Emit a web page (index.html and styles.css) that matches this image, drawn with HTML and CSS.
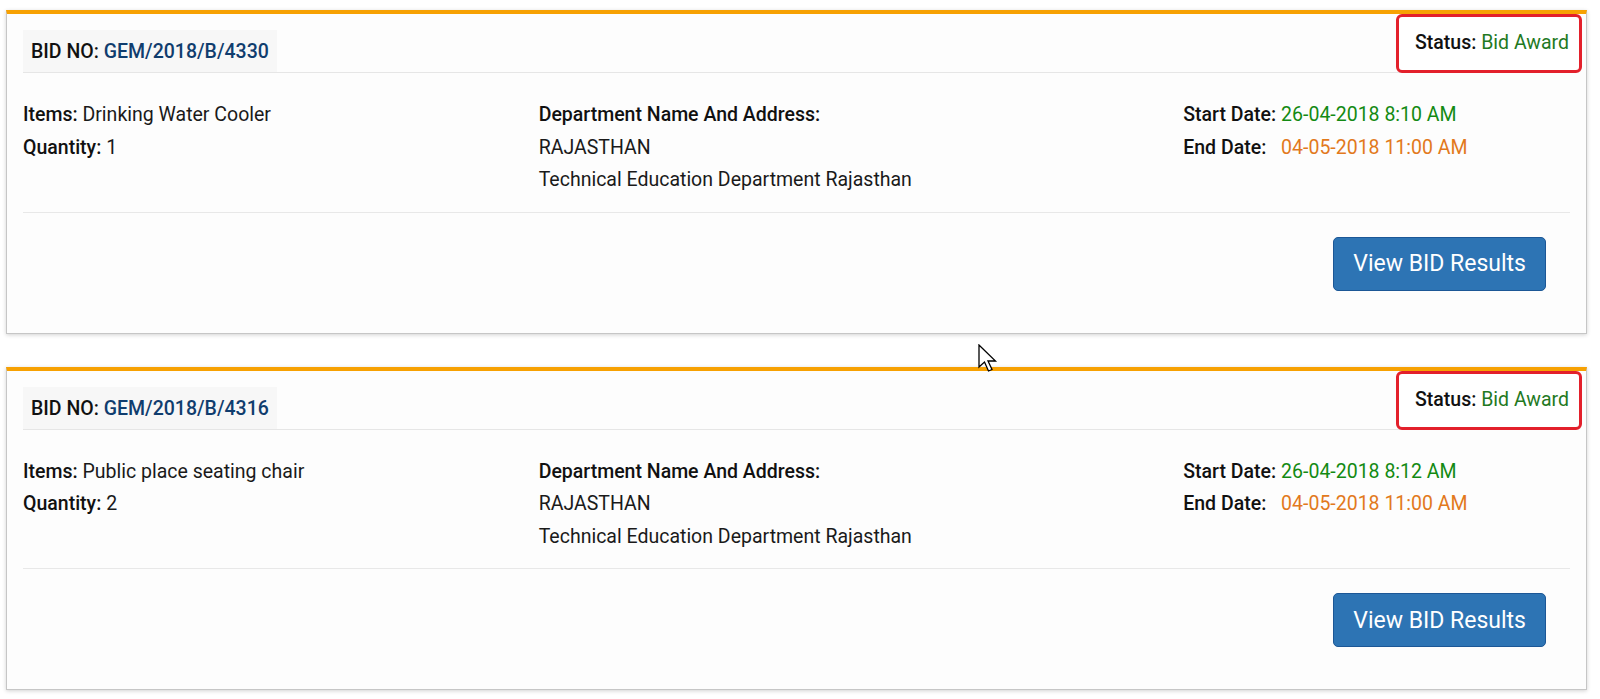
FILE: index.html
```html
<!DOCTYPE html>
<html lang="en">
<head>
    <meta charset="UTF-8">
    <meta name="viewport" content="width=device-width, initial-scale=1.0">
    <title>Bid List</title>
    <link rel="stylesheet" href="styles.css">
</head>
<body>
    <div class="bid-list">
        <!-- bid 4330 -->
        <div class="bid-card">
            <div class="bid-head">
                <div class="bid-no">BID NO: <a href="#">GEM/2018/B/4330</a></div>
            </div>
            <div class="bid-status">Status: <span>Bid Award</span></div>
            <div class="bid-body">
                <div class="col">
                    <p><b>Items:</b> Drinking Water Cooler</p>
                    <p><b>Quantity:</b> 1</p>
                </div>
                <div class="col">
                    <p><b>Department Name And Address:</b></p>
                    <p>RAJASTHAN</p>
                    <p>Technical Education Department Rajasthan</p>
                </div>
                <div class="col dates">
                    <b>Start Date:</b><span class="start">26-04-2018 8:10 AM</span>
                    <b>End Date:</b><span class="end">04-05-2018 11:00 AM</span>
                </div>
            </div>
            <div class="bid-foot">
                <button class="btn-result">View BID Results</button>
            </div>
        </div>

        <!-- bid 4316 -->
        <div class="bid-card">
            <div class="bid-head">
                <div class="bid-no">BID NO: <a href="#">GEM/2018/B/4316</a></div>
            </div>
            <div class="bid-status">Status: <span>Bid Award</span></div>
            <div class="bid-body">
                <div class="col">
                    <p><b>Items:</b> Public place seating chair</p>
                    <p><b>Quantity:</b> 2</p>
                </div>
                <div class="col">
                    <p><b>Department Name And Address:</b></p>
                    <p>RAJASTHAN</p>
                    <p>Technical Education Department Rajasthan</p>
                </div>
                <div class="col dates">
                    <b>Start Date:</b><span class="start">26-04-2018 8:12 AM</span>
                    <b>End Date:</b><span class="end">04-05-2018 11:00 AM</span>
                </div>
            </div>
            <div class="bid-foot">
                <button class="btn-result">View BID Results</button>
            </div>
        </div>
    </div>

    <!-- mouse pointer -->
    <svg class="pointer" width="20" height="29" viewBox="0 0 20 29">
        <path d="M1 1 L1 23 L6.5 18 L10.5 27 L14 25.5 L10 17 L17.5 17 Z" fill="#fff" stroke="#000" stroke-width="1.3" stroke-linejoin="miter"/>
    </svg>
</body>
</html>
```

FILE: styles.css
```css
* { margin: 0; padding: 0; box-sizing: border-box; }
body {
    background: #fff;
    font-family: Roboto, "Liberation Sans", Arial, sans-serif;
    font-size: 19.5px;
    color: #1a1a1a;
    position: relative;
    min-height: 100vh;
}
.bid-list {
    padding: 10px 13px 0 6px;
    display: flex;
    flex-direction: column;
    gap: 33px;
}
.bid-card {
    position: relative;
    background: #fdfdfd;
    border: 1px solid #c6c6c6;
    border-top: 4px solid #f7a102;
    box-shadow: 0 1px 4px rgba(0, 0, 0, 0.18);
    padding: 0 16px 42px;
}
.bid-head {
    padding-top: 16px;
    border-bottom: 1px solid #e6e6e6;
}
.bid-no {
    display: inline-block;
    background: #f7f7f7;
    line-height: 41px;
    padding: 1px 8px 0;
    font-weight: 500;
    color: #111;
}
.bid-no a { color: #103d6e; text-decoration: none; font-weight: 500; }

/* highlighted status box */
.bid-status {
    position: absolute;
    top: 0;
    right: 4px;
    width: 186px;
    height: 59px;
    background: #fff;
    border: 3px solid #e3202b;
    border-radius: 6px;
    padding: 14px 10px 0 0;
    line-height: 24px;
    text-align: right;
    font-weight: 500;
    color: #111;
}
.bid-status span { font-weight: 400; color: #23791f; }

.bid-body {
    display: grid;
    grid-template-columns: 4fr 5fr 3fr;
    padding: 26px 0 15px;
    border-bottom: 1px solid #e8e8e8;
    line-height: 32.5px;
}
.bid-body b { font-weight: 500; color: #111; }
.dates {
    display: grid;
    grid-template-columns: auto 1fr;
    column-gap: 5px;
    align-content: start;
}
.start { color: #138a13; }
.end { color: #e2791c; }

.bid-foot {
    display: flex;
    justify-content: flex-end;
    padding: 24px 24px 0 0;
}
.btn-result {
    height: 54px;
    padding: 0 19px;
    background: #2d74b4;
    border: 1px solid #1c5796;
    border-radius: 5px;
    color: #fff;
    font-family: Roboto, "Liberation Sans", Arial, sans-serif;
    font-size: 23px;
    cursor: pointer;
}
.btn-result:hover { background: #286aa6; }

.pointer {
    position: absolute;
    left: 978px;
    top: 344px;
}
```
